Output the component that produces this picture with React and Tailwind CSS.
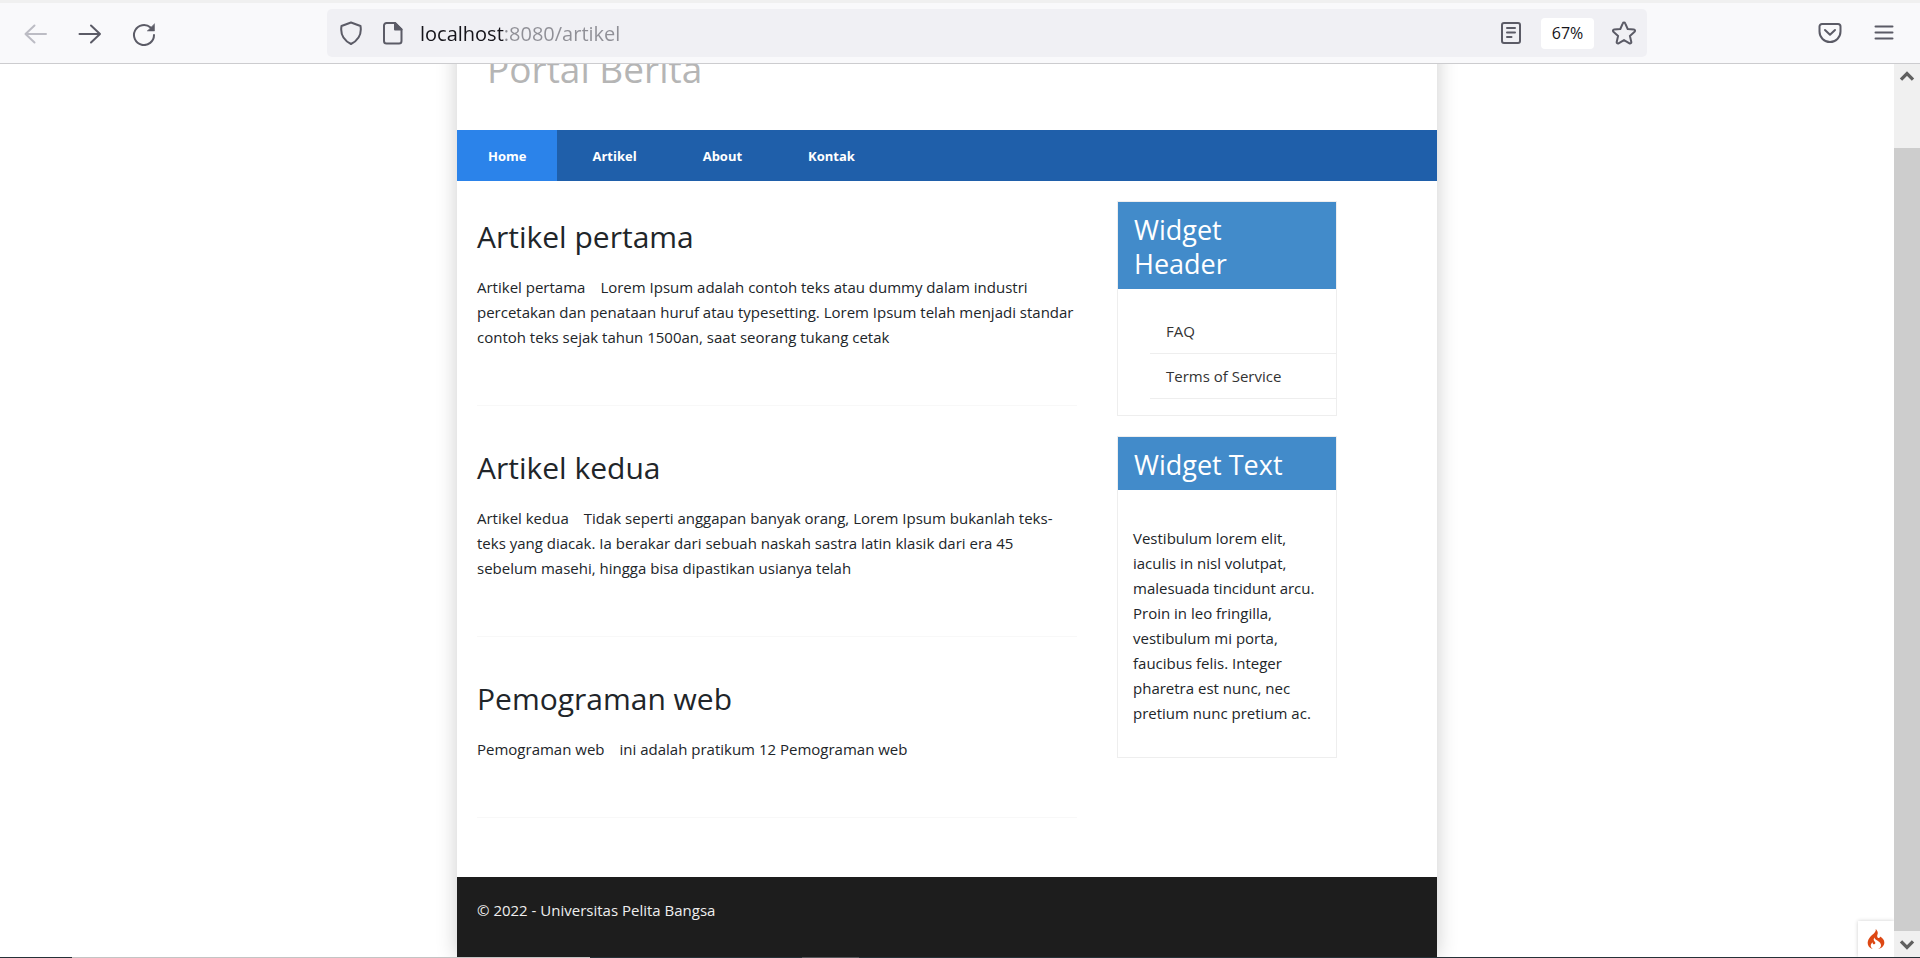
import { SiCodeigniter } from "react-icons/si";

const articles = [
  {
    title: "Artikel pertama",
    text: "Lorem Ipsum adalah contoh teks atau dummy dalam industri percetakan dan penataan huruf atau typesetting. Lorem Ipsum telah menjadi standar contoh teks sejak tahun 1500an, saat seorang tukang cetak",
  },
  {
    title: "Artikel kedua",
    text: "Tidak seperti anggapan banyak orang, Lorem Ipsum bukanlah teks-teks yang diacak. Ia berakar dari sebuah naskah sastra latin klasik dari era 45 sebelum masehi, hingga bisa dipastikan usianya telah",
  },
  { title: "Pemograman web", text: "ini adalah pratikum 12 Pemograman web" },
];

function Icon({ className = "size-6", width = 2, children }) {
  return (
    <svg
      viewBox="0 0 24 24"
      className={className}
      fill="none"
      stroke="currentColor"
      strokeWidth={width}
      strokeLinecap="round"
      strokeLinejoin="round"
      aria-hidden="true"
    >
      {children}
    </svg>
  );
}

function Toolbar() {
  return (
    <header className="flex h-16 shrink-0 items-center border-t-3 border-b border-t-[#f0f0f0] border-b-[#cccccf] bg-[#f9f9fb] pr-6 pl-6 text-[#5b5b66]">
      <div className="flex w-[303px] shrink-0 items-center gap-[30px] pt-0.5">
        <button type="button" aria-label="Back" className="text-[#bcbcc4]">
          <Icon>
            <path d="M22 12H1.500M10.500 3.500 1.500 12l9 8.500" />
          </Icon>
        </button>
        <button type="button" aria-label="Forward">
          <Icon>
            <path d="M1.500 12H22M13 3.500l9 8.500-9 8.500" />
          </Icon>
        </button>
        <button type="button" aria-label="Reload">
          <Icon>
            <path d="M22 13a10 10 0 1 1-3.400-7.500" />
            <path d="M22.500 2v7h-7z" fill="currentColor" strokeWidth="0.500" />
          </Icon>
        </button>
      </div>
      <div className="flex h-12 flex-1 items-center rounded-[5px] bg-[#f0f0f4] pr-[11px] pl-3">
        <Icon>
          <path d="M12 1.500 2.500 5C1 14 5 19.500 12 23c7-3.500 11-9 9.500-18z" />
        </Icon>
        <Icon className="ml-[18px] size-6">
          <path d="M5.500 2h8.500l6.500 6.500v11.500a2.500 2.500 0 0 1-2.500 2.500h-12.500a2.500 2.500 0 0 1-2.500-2.500v-15.500a2.500 2.500 0 0 1 2.500-2.500z" />
          <path d="M14 2v6.500h6.500z" fill="currentColor" />
        </Icon>
        <input
          aria-label="Address"
          defaultValue="localhost:8080/artikel"
          className="ml-[15px] h-8 min-w-0 flex-1 bg-[linear-gradient(to_right,#15141a_85px,#8f8f96_85px)] bg-clip-text font-['Open_Sans','Noto_Sans',sans-serif] text-[20px] text-transparent caret-[#15141a] outline-none"
        />
        <button type="button" aria-label="Reader view" className="mr-[18px]">
          <Icon>
            <rect x="3" y="2" width="18" height="20" rx="2" />
            <path d="M8 7h8M8 11.500h8M8 16h4.500" />
          </Icon>
        </button>
        <button type="button" className="h-[31px] w-[53px] rounded-sm bg-white font-['Open_Sans','Noto_Sans',sans-serif] text-[16px] text-[#15141a]">
          67%
        </button>
        <button type="button" aria-label="Bookmark" className="ml-[18px]">
          <Icon>
            <path d="M12 1.500c.6 0 1 .3 1.200.8l2.500 5.700 6.200.6c1.100.1 1.500 1.400.7 2.100l-4.700 4.200 1.400 6.100c.2 1.100-.9 1.900-1.800 1.300L12 19.100l-5.500 3.200c-.9.600-2-.2-1.800-1.300l1.400-6.100-4.700-4.200c-.8-.7-.4-2 .7-2.100l6.200-.6 2.500-5.700c.2-.5.6-.8 1.200-.8z" />
          </Icon>
        </button>
      </div>
      <div className="flex w-[249px] shrink-0 items-center justify-end gap-[30px]">
        <button type="button" aria-label="Pocket">
          <Icon>
            <path d="M4 3h16a2.500 2.500 0 0 1 2.500 2.500v5a10.500 10.500 0 0 1-21 0v-5A2.500 2.500 0 0 1 4 3z" />
            <path d="m7 9 5 4.800L17 9" />
          </Icon>
        </button>
        <button type="button" aria-label="Menu">
          <Icon>
            <path d="M3.500 5.500h17M3.500 11.500h17M3.500 17.500h17" />
          </Icon>
        </button>
      </div>
    </header>
  );
}

function Nav() {
  return (
    <nav className="flex h-[51px] gap-1 bg-[#1f5faa] text-[13px] font-bold text-white">
      {["Home", "Artikel", "About", "Kontak"].map((label) => (
        <a
          key={label}
          href="#"
          aria-current={label === "Home" ? "page" : undefined}
          className="flex items-center px-[31px] pt-0.5 aria-[current=page]:bg-[#2b83ea]"
        >
          {label}
        </a>
      ))}
    </nav>
  );
}

function Widget({ title, children }) {
  return (
    <section className="border border-[#eeeeee]">
      <h3 className="bg-[#428bca] pt-[11px] pr-12 pb-2 pl-4 text-[27px] leading-[34px] text-white">{title}</h3>
      {children}
    </section>
  );
}

function Scrollbar() {
  return (
    <div className="flex w-[26px] shrink-0 flex-col bg-[#f0f0f0] text-[#606060]">
      <button type="button" aria-label="Scroll up" className="flex h-[26px] items-center justify-center">
        <Icon className="size-4" width={5}>
          <path d="m3 16 9-9 9 9" strokeLinecap="butt" strokeLinejoin="miter" />
        </Icon>
      </button>
      <div className="mt-[58px] flex-1 bg-[#cdcdcd]" />
      <button type="button" aria-label="Scroll down" className="flex h-[26px] items-center justify-center">
        <Icon className="size-4" width={5}>
          <path d="m3 8 9 9 9-9" strokeLinecap="butt" strokeLinejoin="miter" />
        </Icon>
      </button>
    </div>
  );
}

export default function App() {
  return (
    <div className="flex h-screen flex-col overflow-hidden bg-white">
      <Toolbar />
      <div className="flex min-h-0 flex-1">
        <div className="relative flex min-w-0 flex-1 flex-col overflow-hidden font-['Open_Sans','Noto_Sans',sans-serif] text-[15px] leading-[25px] text-[#212529]">
          <div className="mx-auto -mt-5 flex w-full max-w-[980px] flex-1 flex-col bg-white shadow-[0_0_20px_rgba(0,0,0,0.200)]">
            <h1 className="h-[86px] pl-[30px] text-[37px] leading-[50px] text-[#b5b5b5]">Portal Berita</h1>
            <Nav />
            <div className="flex px-5 pt-5">
              <main className="w-[600px] shrink-0">
                {articles.map((article) => (
                  <article key={article.title} className="mb-[26px] border-b border-[#f8f8f8] pt-4 pb-[55px]">
                    <h2 className="mb-[18px] text-[30px] leading-10">{article.title}</h2>
                    <p>
                      <span className="mr-[15px]">{article.title}</span>
                      {article.text}
                    </p>
                  </article>
                ))}
              </main>
              <aside className="ml-10 flex w-[220px] shrink-0 flex-col gap-5">
                <Widget title="Widget Header">
                  <ul className="mt-5 mb-4 ml-8">
                    {["FAQ", "Terms of Service"].map((label) => (
                      <li key={label} className="border-b border-[#eeeeee] px-4 py-[10px] leading-6">
                        <a href="#" className="text-[#333333]">{label}</a>
                      </li>
                    ))}
                  </ul>
                </Widget>
                <Widget title="Widget Text">
                  <p className="px-[15px] pt-9 pb-[31px]">
                    Vestibulum lorem elit, iaculis in nisl volutpat, malesuada tincidunt arcu. Proin in leo fringilla,
                    vestibulum mi porta, faucibus felis. Integer pharetra est nunc, nec pretium nunc pretium ac.
                  </p>
                </Widget>
              </aside>
            </div>
            <footer className="mt-[33px] flex-1 bg-[#1d1d1d] px-5 py-[21px] text-[#eeeeee]">
              © 2022 - Universitas Pelita Bangsa
            </footer>
          </div>
          <button
            type="button"
            aria-label="Debug bar"
            className="absolute right-0 bottom-0 flex size-9 items-center justify-center bg-white text-[#dd4814] shadow-[0_0_4px_rgba(0,0,0,0.200)]"
          >
            <SiCodeigniter className="size-5" aria-hidden="true" />
          </button>
        </div>
        <Scrollbar />
      </div>
      <div className="flex h-px shrink-0 bg-[#263238]">
        <div className="ml-[3.75%] w-[27%] bg-[#c4c4c4]" />
        <div className="ml-[11%] w-[3%] bg-[#55585c]" />
      </div>
    </div>
  );
}
